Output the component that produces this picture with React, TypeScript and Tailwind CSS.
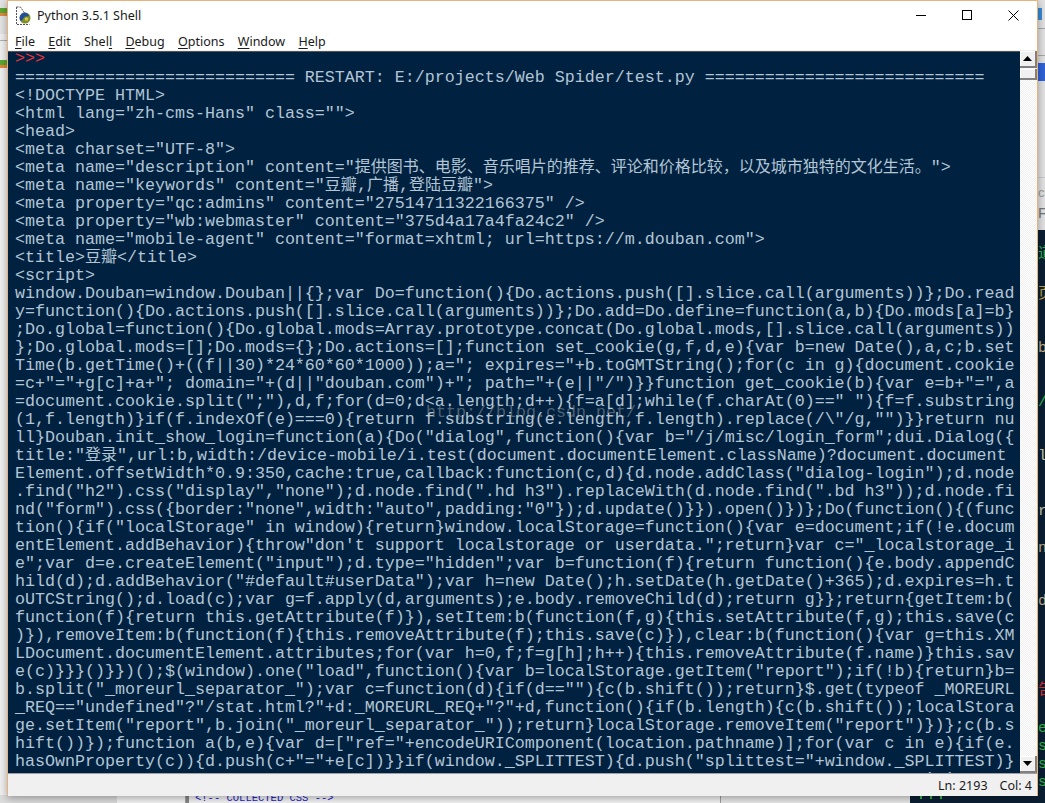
const lines = [
  '============================ RESTART: E:/projects/Web Spider/test.py ============================',
  '<!DOCTYPE HTML>',
  '<html lang="zh-cms-Hans" class="">',
  '<head>',
  '<meta charset="UTF-8">',
  '<meta name="description" content="提供图书、电影、音乐唱片的推荐、评论和价格比较，以及城市独特的文化生活。">',
  '<meta name="keywords" content="豆瓣,广播,登陆豆瓣">',
  '<meta property="qc:admins" content="27514711322166375" />',
  '<meta property="wb:webmaster" content="375d4a17a4fa24c2" />',
  '<meta name="mobile-agent" content="format=xhtml; url=https://m.douban.com">',
  '<title>豆瓣</title>',
  '<script>',
  'window.Douban=window.Douban||{};var Do=function(){Do.actions.push([].slice.call(arguments))};Do.read',
  'y=function(){Do.actions.push([].slice.call(arguments))};Do.add=Do.define=function(a,b){Do.mods[a]=b}',
  ';Do.global=function(){Do.global.mods=Array.prototype.concat(Do.global.mods,[].slice.call(arguments))',
  '};Do.global.mods=[];Do.mods={};Do.actions=[];function set_cookie(g,f,d,e){var b=new Date(),a,c;b.set',
  'Time(b.getTime()+((f||30)*24*60*60*1000));a="; expires="+b.toGMTString();for(c in g){document.cookie',
  '=c+"="+g[c]+a+"; domain="+(d||"douban.com")+"; path="+(e||"/")}}function get_cookie(b){var e=b+"=",a',
  '=document.cookie.split(";"),d,f;for(d=0;d<a.length;d++){f=a[d];while(f.charAt(0)==" "){f=f.substring',
  '(1,f.length)}if(f.indexOf(e)===0){return f.substring(e.length,f.length).replace(/\\"/g,"")}}return nu',
  'll}Douban.init_show_login=function(a){Do("dialog",function(){var b="/j/misc/login_form";dui.Dialog({',
  'title:"登录",url:b,width:/device-mobile/i.test(document.documentElement.className)?document.document',
  'Element.offsetWidth*0.9:350,cache:true,callback:function(c,d){d.node.addClass("dialog-login");d.node',
  '.find("h2").css("display","none");d.node.find(".hd h3").replaceWith(d.node.find(".bd h3"));d.node.fi',
  'nd("form").css({border:"none",width:"auto",padding:"0"});d.update()}}).open()})};Do(function(){(func',
  'tion(){if("localStorage" in window){return}window.localStorage=function(){var e=document;if(!e.docum',
  'entElement.addBehavior){throw"don\'t support localstorage or userdata.";return}var c="_localstorage_i',
  'e";var d=e.createElement("input");d.type="hidden";var b=function(f){return function(){e.body.appendC',
  'hild(d);d.addBehavior("#default#userData");var h=new Date();h.setDate(h.getDate()+365);d.expires=h.t',
  'oUTCString();d.load(c);var g=f.apply(d,arguments);e.body.removeChild(d);return g}};return{getItem:b(',
  'function(f){return this.getAttribute(f)}),setItem:b(function(f,g){this.setAttribute(f,g);this.save(c',
  ')}),removeItem:b(function(f){this.removeAttribute(f);this.save(c)}),clear:b(function(){var g=this.XM',
  'LDocument.documentElement.attributes;for(var h=0,f;f=g[h];h++){this.removeAttribute(f.name)}this.sav',
  'e(c)}}}()}})();$(window).one("load",function(){var b=localStorage.getItem("report");if(!b){return}b=',
  'b.split("_moreurl_separator_");var c=function(d){if(d==""){c(b.shift());return}$.get(typeof _MOREURL',
  '_REQ=="undefined"?"/stat.html?"+d:_MOREURL_REQ+"?"+d,function(){if(b.length){c(b.shift());localStora',
  'ge.setItem("report",b.join("_moreurl_separator_"));return}localStorage.removeItem("report")})};c(b.s',
  'hift())});function a(b,e){var d=["ref="+encodeURIComponent(location.pathname)];for(var c in e){if(e.',
  'hasOwnProperty(c)){d.push(c+"="+e[c])}}if(window._SPLITTEST){d.push("splittest="+window._SPLITTEST)}',
  '                                                                                           i i',
]

const menu: [string, string, string][] = [
  ['', 'F', 'ile'],
  ['', 'E', 'dit'],
  ['Shel', 'l', ''],
  ['', 'D', 'ebug'],
  ['', 'O', 'ptions'],
  ['', 'W', 'indow'],
  ['', 'H', 'elp'],
]

// bits of the editor window peeking out on the right
const sideGlyphs = [
  { top: 'top-[246px]', color: 'text-[#2fb84a]', ch: '道' },
  { top: 'top-[286px]', color: 'text-[#c9a040]', ch: '页' },
  { top: 'top-[340px]', color: 'text-[#c9b48a]', ch: 'b' },
  { top: 'top-[394px]', color: 'text-[#2fb84a]', ch: '/' },
  { top: 'top-[448px]', color: 'text-[#c9c9b0]', ch: 'l' },
  { top: 'top-[503px]', color: 'text-[#c9c9b0]', ch: 'r' },
  { top: 'top-[540px]', color: 'text-[#c9b48a]', ch: 'n' },
  { top: 'top-[593px]', color: 'text-[#c9b48a]', ch: 'd' },
  { top: 'top-[682px]', color: 'text-[#e03030]', ch: '告' },
  { top: 'top-[720px]', color: 'text-[#2fb84a]', ch: 'e' },
  { top: 'top-[738px]', color: 'text-[#2fb84a]', ch: 's' },
  { top: 'top-[756px]', color: 'text-[#2fb84a]', ch: 's' },
  { top: 'top-[774px]', color: 'text-[#2fb84a]', ch: 's' },
]

function CodeLine({ text }: { text: string }) {
  const parts = text.split(/([\u4e00-\u9fff、，。]+)/)
  return (
    <div className="h-[18px] whitespace-pre leading-[18px]">
      {parts.map((p, i) =>
        i % 2 === 1 ? (
          <span key={i} className="font-['Noto_Sans_CJK_SC',sans-serif] text-[16px] leading-[0]">{p}</span>
        ) : (
          <span key={i}>{p}</span>
        )
      )}
    </div>
  )
}

function IdleIcon() {
  return (
    <svg width="18" height="20" viewBox="0 0 18 20" className="shrink-0">
      <path d="M1.5 1v17.5h13M1.5 1h4l4 6" fill="none" stroke="#555" strokeDasharray="2 1" />
      <circle cx="10" cy="12" r="5.5" fill="#7f8f2a" />
      <path d="M10 6.5a5.5 5.5 0 0 0-4.6 8.5c3 0 2-4 5.6-4.500 1.500-.2 3-.5 3-.8A5.500 5.500 0 0 0 10 6.500z" fill="#1f4f9c" />
      <circle cx="11.500" cy="13" r="1.800" fill="#d8c84a" />
    </svg>
  )
}

function ArrowBtn({ up }: { up?: boolean }) {
  return (
    <div className="flex h-[17px] w-[17px] items-center justify-center border-r-2 border-b-2 border-r-[#808080] border-b-[#808080] bg-[#f0f0f0] shadow-[inset_1px_1px_0_#ffffff]">
      <svg width="9" height="5" viewBox="0 0 9 5">
        <path d={up ? 'M4.500 0L9 5H0z' : 'M0 0h9L4.500 5z'} fill="#000" />
      </svg>
    </div>
  )
}

function Backdrop() {
  return (
    <div className="absolute inset-0 overflow-hidden bg-[#f0f0f0]">
      {/* left toolbar slivers */}
      <div className="absolute top-0 left-0 h-[34px] w-2 bg-[#e4e4e4]">
        <div className="mt-[8px] h-[5px] w-[7px] bg-[#5aa832]" />
        <div className="h-[3px] w-[7px] bg-[#e08a3c]" />
      </div>
      <div className="absolute top-[40px] left-0 h-px w-2 bg-[#b0b0b0]" />
      <div className="absolute top-[60px] left-0 w-2">
        <div className="h-[5px] w-[7px] bg-[#5aa832]" />
        <div className="h-[3px] w-[7px] bg-[#e08a3c]" />
      </div>
      {/* right side */}
      <div className="absolute top-0 right-0 h-[230px] w-2 bg-[#e2e2e2]">
        <div className="mt-[8px] h-[12px] w-[5px] bg-[#3a8ad8]" />
        <div className="mt-[8px] h-px bg-[#a8a8a8]" />
        <div className="mt-[26px] h-px bg-[#a8a8a8]" />
        <div className="mt-[7px] h-[18px] bg-[#2f62d8]" />
        <div className="mt-[96px] h-px bg-[#c8c8c8]" />
      </div>
      <div className="absolute top-[183px] left-[1038px] font-['Liberation_Sans',sans-serif] text-[13px] text-[#999]">ct</div>
      <div className="absolute top-[202px] left-[1038px] font-['Liberation_Sans',sans-serif] text-[15px] text-[#777]">F</div>
      <div className="absolute top-[230px] right-0 bottom-0 w-[135px] bg-[#0b1f33]" />
      {sideGlyphs.map((g) => (
        <div key={g.top} className={`absolute left-[1038px] font-['Liberation_Mono','Noto_Sans_CJK_SC',monospace] text-[15px] leading-[18px] ${g.top} ${g.color}`}>
          {g.ch}
        </div>
      ))}
      {/* bottom strip, the html source behind */}
      <div className="absolute bottom-0 left-0 flex h-[8px] w-[910px] overflow-hidden bg-[#f4f4f4]">
        <div className="w-[117px] shrink-0 bg-[#dcdcdc]" />
        <div className="w-[69px] shrink-0 border-r border-[#a0a0a0]" />
        <div className="w-[3px] shrink-0 bg-[#888]" />
        <div className="-mt-[3px] ml-[6px] font-['Liberation_Mono',monospace] text-[10.500px] leading-[12px] whitespace-pre text-[#2222c8]">{'<!-- COLLECTED CSS -->'}</div>
      </div>
      <div className="absolute right-[135px] bottom-0 h-[8px] w-[190px] border-l border-[#a0a0a0] bg-[#e8e8e8]" />
      <div className="absolute top-[796px] left-[920px] h-[3px] w-[2px] bg-[#2fb84a]" />
      <div className="absolute top-[796px] left-[930px] h-[3px] w-[2px] bg-[#2fb84a]" />
      <div className="absolute top-[796px] left-[940px] h-[3px] w-[2px] bg-[#2fb84a]" />
    </div>
  )
}

export default function App() {
  return (
    <div className="relative h-[803px] w-[1045px] overflow-hidden">
      <Backdrop />
      <div className="absolute top-0 left-[7px] flex h-[796px] w-[1031px] flex-col border border-[#e8b27c] bg-white font-['Noto_Sans',sans-serif] text-[#1a1a1a] shadow-[0_2px_8px_rgba(0,0,0,0.35)]">
        <div className="flex h-[29px] shrink-0 items-center pr-[18px] pl-[7px]">
          <IdleIcon />
          <span className="mt-[2px] ml-[4px] text-[12.500px]">Python 3.5.1 Shell</span>
          <div className="ml-auto flex items-center gap-[35px]">
            <svg width="11" height="11" viewBox="0 0 11 11"><path d="M0 5.500h10" stroke="#000" /></svg>
            <svg width="11" height="11" viewBox="0 0 11 11"><rect x=".5" y=".5" width="9" height="9" fill="none" stroke="#000" /></svg>
            <svg width="11" height="11" viewBox="0 0 11 11"><path d="M.5.500l10 10M10.500.500l-10 10" stroke="#000" /></svg>
          </div>
        </div>
        <div className="flex h-[20px] shrink-0 items-center gap-[13.300px] pt-[4px] pl-[7px] text-[12.500px]">
          {menu.map(([a, b, c]) => (
            <span key={a + b + c}>
              {a}
              <span className="underline underline-offset-2">{b}</span>
              {c}
            </span>
          ))}
        </div>
        <div className="flex h-[723px] shrink-0 border-t border-[#f0f0f0]">
          <div className="relative flex-1 overflow-hidden border-t border-[#555] bg-[#002240] pl-[7px] font-['Liberation_Mono','Noto_Sans_CJK_SC',monospace] text-[16.670px] text-[#b3c5d6]">
            <div className="h-[17px] leading-[14px] whitespace-pre text-[#e8343c]">{'>>>'}</div>
            {lines.map((l, i) => (
              <CodeLine key={i} text={l} />
            ))}
            <div className="absolute top-[348px] left-[418px] whitespace-pre text-[rgba(205,205,205,0.38)]">http://blog.csdn.net/</div>
          </div>
          <div className="flex w-[17px] shrink-0 flex-col bg-[repeating-conic-gradient(#ffffff_0_25%,#f0f0f0_0_50%)] bg-[length:2px_2px]">
            <ArrowBtn up />
            <div className="mt-[1px] h-[11px] w-[17px] border-r-2 border-b-2 border-r-[#808080] border-b-[#808080] bg-[#f0f0f0] shadow-[inset_1px_1px_0_#ffffff]" />
            <div className="flex-1" />
            <ArrowBtn />
          </div>
        </div>
        <div className="flex flex-1 items-center justify-end gap-[12px] border-t border-[#a0a0a0] bg-[#f0f0f0] pt-[3px] pr-[5px] text-[12.500px]">
          <span>Ln: 2193</span>
          <span>Col: 4</span>
        </div>
      </div>
    </div>
  )
}
